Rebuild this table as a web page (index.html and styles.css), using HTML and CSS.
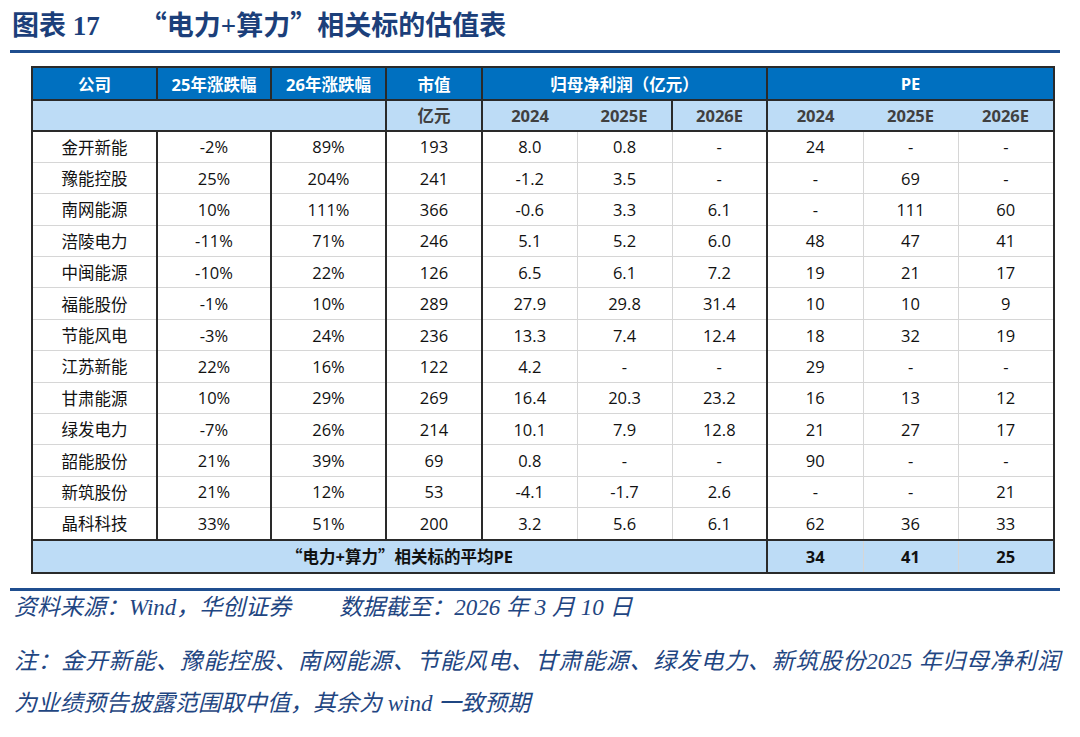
FILE: index.html
```html
<!DOCTYPE html>
<html lang="zh-CN">
<head>
<meta charset="utf-8">
<title>估值表</title>
<link rel="stylesheet" href="styles.css">
</head>
<body>
<div class="page">
  <h1 class="title"><span class="t-num">图表 17</span><span class="t-name"><span class="q">“</span>电力+算力<span class="q">”</span>相关标的估值表</span></h1>
  <div class="rule"></div>
  <table class="val">
    <colgroup>
      <col style="width:125px"><col style="width:114px"><col style="width:115px"><col style="width:96px">
      <col style="width:95px"><col style="width:95px"><col style="width:95px">
      <col style="width:96px"><col style="width:95px"><col style="width:96px">
    </colgroup>
    <thead>
      <tr class="h1">
        <th>公司</th><th>25年涨跌幅</th><th>26年涨跌幅</th><th>市值</th>
        <th colspan="3">归母净利润（亿元）</th><th colspan="3" class="grp">PE</th>
      </tr>
      <tr class="h2">
        <th colspan="3"></th><th>亿元</th><th>2024</th><th>2025E</th><th>2026E</th><th class="grp">2024</th><th>2025E</th><th>2026E</th>
      </tr>
    </thead>
    <tbody>
      <tr><td>金开新能</td><td>-2%</td><td>89%</td><td>193</td><td>8.0</td><td class="l">0.8</td><td class="l">-</td><td class="grp">24</td><td class="l">-</td><td class="l">-</td></tr>
      <tr><td>豫能控股</td><td>25%</td><td>204%</td><td>241</td><td>-1.2</td><td class="l">3.5</td><td class="l">-</td><td class="grp">-</td><td class="l">69</td><td class="l">-</td></tr>
      <tr><td>南网能源</td><td>10%</td><td>111%</td><td>366</td><td>-0.6</td><td class="l">3.3</td><td class="l">6.1</td><td class="grp">-</td><td class="l">111</td><td class="l">60</td></tr>
      <tr><td>涪陵电力</td><td>-11%</td><td>71%</td><td>246</td><td>5.1</td><td class="l">5.2</td><td class="l">6.0</td><td class="grp">48</td><td class="l">47</td><td class="l">41</td></tr>
      <tr><td>中闽能源</td><td>-10%</td><td>22%</td><td>126</td><td>6.5</td><td class="l">6.1</td><td class="l">7.2</td><td class="grp">19</td><td class="l">21</td><td class="l">17</td></tr>
      <tr><td>福能股份</td><td>-1%</td><td>10%</td><td>289</td><td>27.9</td><td class="l">29.8</td><td class="l">31.4</td><td class="grp">10</td><td class="l">10</td><td class="l">9</td></tr>
      <tr><td>节能风电</td><td>-3%</td><td>24%</td><td>236</td><td>13.3</td><td class="l">7.4</td><td class="l">12.4</td><td class="grp">18</td><td class="l">32</td><td class="l">19</td></tr>
      <tr><td>江苏新能</td><td>22%</td><td>16%</td><td>122</td><td>4.2</td><td class="l">-</td><td class="l">-</td><td class="grp">29</td><td class="l">-</td><td class="l">-</td></tr>
      <tr><td>甘肃能源</td><td>10%</td><td>29%</td><td>269</td><td>16.4</td><td class="l">20.3</td><td class="l">23.2</td><td class="grp">16</td><td class="l">13</td><td class="l">12</td></tr>
      <tr><td>绿发电力</td><td>-7%</td><td>26%</td><td>214</td><td>10.1</td><td class="l">7.9</td><td class="l">12.8</td><td class="grp">21</td><td class="l">27</td><td class="l">17</td></tr>
      <tr><td>韶能股份</td><td>21%</td><td>39%</td><td>69</td><td>0.8</td><td class="l">-</td><td class="l">-</td><td class="grp">90</td><td class="l">-</td><td class="l">-</td></tr>
      <tr><td>新筑股份</td><td>21%</td><td>12%</td><td>53</td><td>-4.1</td><td class="l">-1.7</td><td class="l">2.6</td><td class="grp">-</td><td class="l">-</td><td class="l">21</td></tr>
      <tr><td>晶科科技</td><td>33%</td><td>51%</td><td>200</td><td>3.2</td><td class="l">5.6</td><td class="l">6.1</td><td class="grp">62</td><td class="l">36</td><td class="l">33</td></tr>
    </tbody>
    <tfoot>
      <tr class="avg"><td colspan="7"><span class="q">“</span>电力+算力<span class="q">”</span>相关标的平均PE</td><td class="grp">34</td><td class="l">41</td><td class="l">25</td></tr>
    </tfoot>
  </table>
  <div class="rule rule-foot"></div>
  <p class="src"><span>资料来源：Wind，华创证券</span><span class="date">数据截至：2026 年 3 月 10 日</span></p>
  <p class="note note-first">注：金开新能、豫能控股、南网能源、节能风电、甘肃能源、绿发电力、新筑股份2025 年归母净利润</p>
  <p class="note">为业绩预告披露范围取中值，其余为 wind 一致预期</p>
</div>
</body>
</html>
```
FILE: styles.css
```css
html, body {
  margin: 0;
  padding: 0;
  background: #ffffff;
}

.page {
  width: 1080px;
  height: 737px;
  overflow: hidden;
  padding: 0 20px 0 10px;
  box-sizing: border-box;
}

.title {
  margin: 0;
  height: 50px;
  padding: 6px 0 0 2px;
  box-sizing: border-box;
  font-family: "Liberation Serif", "Noto Sans CJK SC", serif;
  font-size: 27px;
  font-weight: bold;
  line-height: 36px;
  color: #1c3f7a;
  white-space: nowrap;
}

.q {
  font-family: "Noto Sans CJK SC", sans-serif;
}

.t-name {
  margin-left: 40px;
}

.rule {
  height: 3px;
  background: #1f4e8f;
}

.val {
  margin: 13px 0 0 21px;
  border-collapse: collapse;
  table-layout: fixed;
  width: 1022px;
  font-family: "Open Sans", "Noto Sans CJK SC", sans-serif;
  font-size: 16.5px;
  color: #111111;
  text-align: center;
  border: 2px solid #2a2a2a;
}

.val th, .val td {
  padding: 0;
  text-align: center;
  white-space: nowrap;
}

.h1 th {
  background: #0070c0;
  color: #ffffff;
  font-weight: bold;
  height: 31px;
  border-right: 2px solid #2a2a2a;
  border-bottom: 2px solid #2a2a2a;
}

.h2 th {
  background: #bddcf6;
  color: #404040;
  font-weight: bold;
  height: 28.5px;
  border-bottom: 2px solid #2a2a2a;
}

.h2 th:nth-child(1),
.h2 th:nth-child(2),
.h2 th:nth-child(4) {
  border-right: 2px solid #2a2a2a;
}

.val tbody td {
  height: 30.4px;
  border-bottom: 1px solid #d6d6d6;
  border-right: 2px solid #2a2a2a;
}

.val tbody td.l,
.avg td.l {
  border-left: 1px solid #d6d6d6;
}

.val tbody td:nth-child(5),
.val tbody td:nth-child(6),
.val tbody td:nth-child(8),
.val tbody td:nth-child(9),
.val tbody td:nth-child(10) {
  border-right: 1px solid #d6d6d6;
}

.val .grp {
  border-left: 2px solid #2a2a2a;
}

.avg td {
  background: #bddcf6;
  color: #111111;
  font-weight: bold;
  height: 31.5px;
  border-top: 2px solid #2a2a2a;
}

.rule-foot {
  margin-top: 14px;
}

.src, .note {
  margin: 0;
  padding-left: 4px;
  font-family: "Liberation Serif", "Noto Sans CJK SC", serif;
  font-style: italic;
  font-size: 23px;
  color: #1f4682;
  white-space: nowrap;
}

.src {
  margin-top: 2px;
  line-height: 30px;
}

.date {
  margin-left: 48px;
}

.note-first {
  margin-top: 24px;
  line-height: 30px;
  text-align: justify;
  text-align-last: justify;
}

.note {
  line-height: 30px;
}

.note + .note {
  margin-top: 12px;
}
```
